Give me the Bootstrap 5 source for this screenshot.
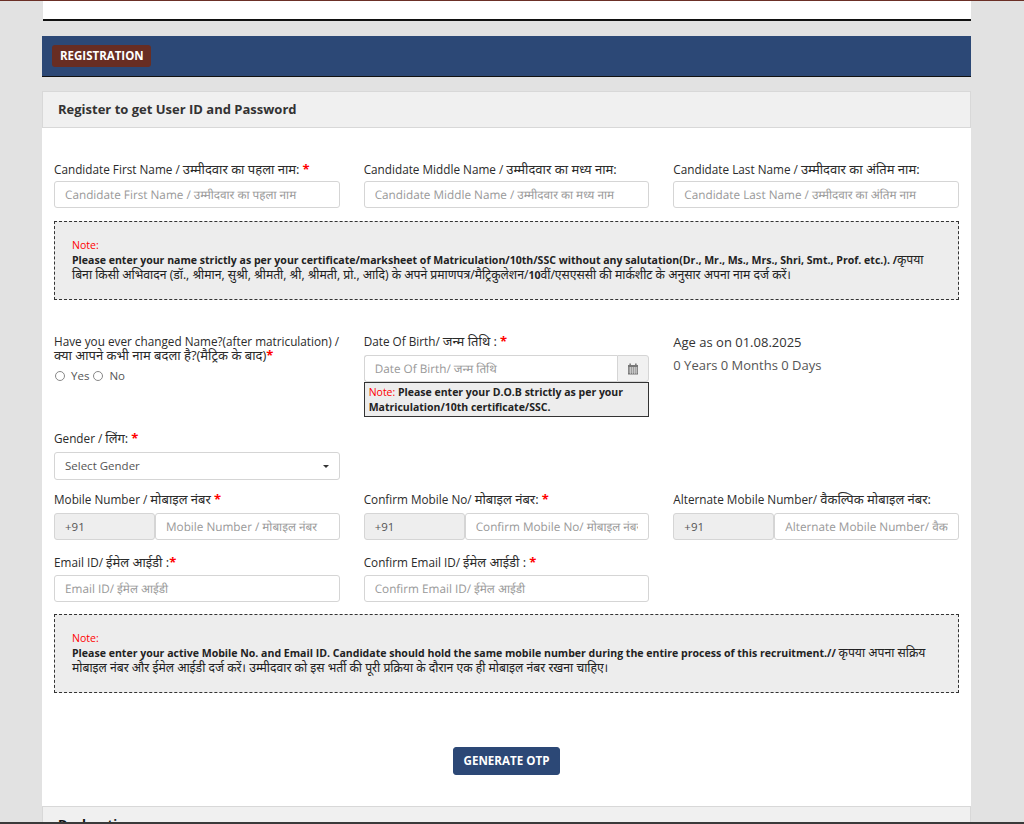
<!DOCTYPE html>
<html lang="en"><head><meta charset="utf-8"><title>Registration</title>
<link rel="stylesheet" href="https://cdn.jsdelivr.net/npm/bootstrap@5.3.0/dist/css/bootstrap.min.css">
<style>
html,body{height:824px;overflow:hidden}
body{background:#e2e2e2;font-family:"Open Sans","Noto Sans","Noto Sans Devanagari","Lohit Devanagari",sans-serif;font-size:12px;color:#333;border-top:1px solid #6b2f26;position:relative}
.page-wrap{padding:0 53px 0 42px}
.top-strip{height:20px;background:#fff;margin-left:1px;border-bottom:2px solid #111}
.reg-banner{margin-top:15px;height:41px;background:#2c4876;border-bottom:1px solid #111;padding:9px 10px}
.reg-tag{display:block;width:99px;background:#682d23;color:#fff;font-weight:700;font-size:11.5px;line-height:21px;height:22px;padding:0 8px;border-radius:3px}
.reg-card{margin-top:14px;border-radius:0;border:0;background:#fff}
.reg-head{height:37px;background:#f0f0f0;border:1px solid #d8d8d8;padding:0 15px;font-size:13px;font-weight:700;line-height:35px;color:#333}
.reg-body{padding:34px 12px 0;height:678px}
.reg-body .row{--bs-gutter-x:24px}
.fld-label{display:block;line-height:14px;height:16px;margin-bottom:3px;font-size:11.75px;color:#2b2b2b;white-space:nowrap}
.hi{font-size:13px;line-height:1}
.req{color:#f00;font-weight:700;font-size:13px;line-height:1}
.fld{height:27px;font-size:11.75px;text-rendering:geometricPrecision;padding:0 10px;border:1px solid #d5d5d5;border-radius:3px;color:#555;box-shadow:none}
.fld::placeholder{color:#999;opacity:1}
.note-box{background:#ededed;border:1px dashed #333;padding:16px 16px 16px 17px;font-size:10.55px;line-height:15px;color:#222;height:79px;margin-top:13px}
.note-box .hi{font-size:12.2px}
.note-red{color:#f00;display:block}
.tick-row{font-size:11.5px;color:#555;display:flex;align-items:center;margin-top:5px;padding-left:1px}
.radio-dot{width:10px;height:10px;margin:0 6px 0 0;border-radius:50%;appearance:none;border:1px solid #888;background:#fff}
.dob-note{background:#ededed;border:1px solid #333;padding:2px 4px;font-size:10.5px;line-height:15px;font-weight:700;color:#222;height:35px}
.dob-note span{color:#f00;font-weight:400}
.cal-btn{flex:none;width:32px;height:27px;border:1px solid #d5d5d5;background:#f1f1f1;border-radius:0 3px 3px 0;display:flex;align-items:center;justify-content:center}
.dob-in{border-radius:3px 0 0 3px;border-right:0}
.age-title{font-size:13px;line-height:18px;color:#333;margin-top:-1px}
.age-val{font-size:13px;line-height:18px;color:#555;margin-top:5px}
.sel-fld{height:28px;font-size:11.5px;padding:0 10px;border:1px solid #d5d5d5;border-radius:3px;color:#555;display:flex;align-items:center;justify-content:space-between;background:#fff}
.caret-mark{width:0;height:0;border-left:3px solid transparent;border-right:3px solid transparent;border-top:3px solid #333}
.code-box{width:101px;flex:none;height:27px;background:#eee;border:1px solid #d5d5d5;border-radius:3px;padding:0 10px;font-size:11.5px;line-height:25px;color:#555}
.have-label{line-height:14px;font-size:11.75px;color:#2b2b2b}
.otp-btn{background:#2c4876;color:#fff;font-weight:700;font-size:11.6px;border:1px solid #2c4876;border-radius:3px;height:28px;padding:0 10px;line-height:26px}
.otp-btn:hover{background:#2c4876;color:#fff}
.next-head{height:37px;background:#f0f0f0;border:1px solid #d8d8d8;padding:0 15px;font-size:13px;font-weight:700;line-height:35px;color:#111}
.bottom-edge{position:absolute;left:0;right:0;bottom:0;height:2px;background:#3a3a3a}
</style></head>
<body>
<div class="page-wrap">
  <div class="top-strip"></div>
  <div class="reg-banner"><span class="reg-tag">REGISTRATION</span></div>
  <div class="reg-card">
    <div class="reg-head">Register to get User ID and Password</div>
    <div class="reg-body">
      <div class="row">
        <div class="col-4"><label class="fld-label">Candidate First Name / <span class="hi">उम्मीदवार का पहला नाम:</span> <span class="req">*</span></label><input class="form-control fld" placeholder="Candidate First Name / उम्मीदवार का पहला नाम"></div>
        <div class="col-4"><label class="fld-label">Candidate Middle Name / <span class="hi">उम्मीदवार का मध्य नाम:</span></label><input class="form-control fld" placeholder="Candidate Middle Name / उम्मीदवार का मध्य नाम"></div>
        <div class="col-4"><label class="fld-label">Candidate Last Name / <span class="hi">उम्मीदवार का अंतिम नाम:</span></label><input class="form-control fld" placeholder="Candidate Last Name / उम्मीदवार का अंतिम नाम"></div>
      </div>
      <div class="note-box"><span class="note-red">Note:</span><b>Please enter your name strictly as per your certificate/marksheet of Matriculation/10th/SSC without any salutation(Dr., Mr., Ms., Mrs., Shri, Smt., Prof. etc.). /</b><span class="hi">कृपया बिना किसी अभिवादन (डॉ., श्रीमान, सुश्री, श्रीमती, श्री, श्रीमती, प्रो., आदि) के अपने प्रमाणपत्र/मैट्रिकुलेशन/</span><b>10</b><span class="hi">वीं/एसएससी की मार्कशीट के अनुसार अपना नाम दर्ज करें।</span></div>
      <div class="row" style="margin-top:34px">
        <div class="col-4">
          <label class="d-block mb-0 have-label">Have you ever changed Name?(after matriculation) / <span class="hi">क्या आपने कभी नाम बदला है?(मैट्रिक के बाद)</span><span class="req">*</span></label>
          <div class="tick-row"><input type="radio" class="radio-dot"><span class="me-1">Yes</span><input type="radio" class="radio-dot"><span>No</span></div>
        </div>
        <div class="col-4">
          <label class="fld-label" style="margin-bottom:5px">Date Of Birth/ <span class="hi">जन्म तिथि :</span> <span class="req">*</span></label>
          <div class="d-flex"><input class="form-control fld dob-in" placeholder="Date Of Birth/ जन्म तिथि">
            <span class="cal-btn"><svg width="12" height="12" viewBox="0 0 12 12"><rect x="1" y="2" width="10" height="9.5" fill="#777"/><rect x="2.4" y="0.5" width="1.5" height="2.5" fill="#777"/><rect x="8.1" y="0.5" width="1.5" height="2.5" fill="#777"/><path d="M1.5 5h9M1.5 7h9M1.5 9h9M3.4 4v7M5.4 4v7M7.4 4v7M9.2 4v7" stroke="#eee" stroke-width=".6"/></svg></span></div>
          <div class="dob-note"><span>Note:</span> Please enter your D.O.B strictly as per your Matriculation/10th certificate/SSC.</div>
        </div>
        <div class="col-4"><div class="age-title">Age as on 01.08.2025</div><div class="age-val">0 Years 0 Months 0 Days</div></div>
      </div>
      <div class="row" style="margin-top:14px">
        <div class="col-4"><label class="fld-label" style="margin-bottom:5px">Gender / <span class="hi">लिंग:</span> <span class="req">*</span></label><div class="sel-fld">Select Gender<i class="caret-mark"></i></div></div>
      </div>
      <div class="row" style="margin-top:12px">
        <div class="col-4"><label class="fld-label" style="margin-bottom:5px">Mobile Number / <span class="hi">मोबाइल नंबर</span> <span class="req">*</span></label><div class="d-flex"><div class="code-box">+91</div><input class="form-control fld" placeholder="Mobile Number / मोबाइल नंबर"></div></div>
        <div class="col-4"><label class="fld-label" style="margin-bottom:5px">Confirm Mobile No/ <span class="hi">मोबाइल नंबर:</span> <span class="req">*</span></label><div class="d-flex"><div class="code-box">+91</div><input class="form-control fld" placeholder="Confirm Mobile No/ मोबाइल नंबर"></div></div>
        <div class="col-4"><label class="fld-label" style="margin-bottom:5px">Alternate Mobile Number/ <span class="hi">वैकल्पिक मोबाइल नंबर:</span></label><div class="d-flex"><div class="code-box">+91</div><input class="form-control fld" placeholder="Alternate Mobile Number/ वैकल्पिक मोबाइल नंबर"></div></div>
      </div>
      <div class="row" style="margin-top:15px">
        <div class="col-4"><label class="fld-label" style="margin-bottom:4px">Email ID/ <span class="hi">ईमेल आईडी :</span><span class="req">*</span></label><input class="form-control fld" placeholder="Email ID/ ईमेल आईडी"></div>
        <div class="col-4"><label class="fld-label" style="margin-bottom:4px">Confirm Email ID/ <span class="hi">ईमेल आईडी :</span> <span class="req">*</span></label><input class="form-control fld" placeholder="Confirm Email ID/ ईमेल आईडी"></div>
      </div>
      <div class="note-box" style="margin-top:12px"><span class="note-red">Note:</span><b>Please enter your active Mobile No. and Email ID. Candidate should hold the same mobile number during the entire process of this recruitment.//</b> <span class="hi">कृपया अपना सक्रिय मोबाइल नंबर और ईमेल आईडी दर्ज करें। उम्मीदवार को इस भर्ती की पूरी प्रक्रिया के दौरान एक ही मोबाइल नंबर रखना चाहिए।</span></div>
      <div class="text-center" style="margin-top:54px"><button class="btn otp-btn">GENERATE OTP</button></div>
    </div>
    <div class="next-head">Declaration</div>
  </div>
</div>
<div class="bottom-edge"></div>
</body></html>
